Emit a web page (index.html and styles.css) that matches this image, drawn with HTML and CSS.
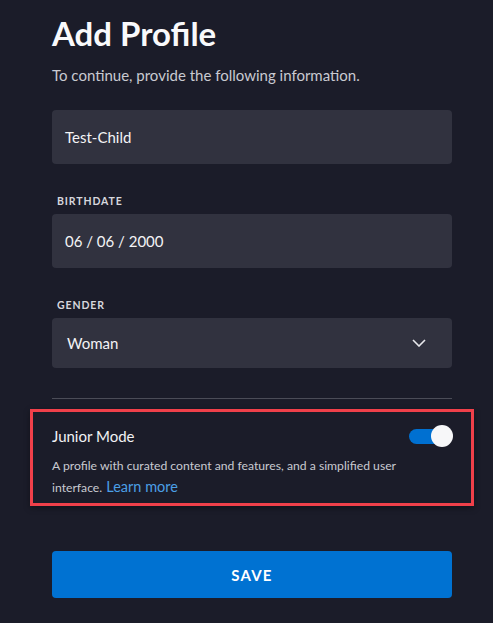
FILE: index.html
```html
<!DOCTYPE html>
<html lang="en">
<head>
<meta charset="utf-8">
<title>Add Profile</title>
<link rel="stylesheet" href="styles.css">
</head>
<body>
<main class="page">
  <h1 class="title">Add Profile</h1>
  <p class="subtitle">To continue, provide the following information.</p>

  <div class="field field-first">
    <div class="input">Test-Child</div>
  </div>

  <div class="field">
    <div class="label">BIRTHDATE</div>
    <div class="input">06 / 06 / 2000</div>
  </div>

  <div class="field">
    <div class="label">GENDER</div>
    <div class="input select">
      <span class="select-value">Woman</span>
      <svg class="chevron" width="14" height="8" viewBox="0 0 14 8"><path d="M1 1 L7 7 L13 1" fill="none" stroke="#e8e8ec" stroke-width="1.6"/></svg>
    </div>
  </div>

  <hr class="divider">

  <section class="junior">
    <div class="junior-head">
      <span class="junior-title">Junior Mode</span>
      <span class="toggle"><span class="toggle-knob"></span></span>
    </div>
    <p class="junior-desc">A profile with curated content and features, and a simplified user<br>interface. <a class="link" href="#">Learn more</a></p>
  </section>

  <button class="save">SAVE</button>
</main>
</body>
</html>
```

FILE: styles.css
```css
html, body {
  margin: 0;
  padding: 0;
  background: #1b1c29;
}
body {
  font-family: Lato, "Noto Sans", sans-serif;
  color: #f4f4f6;
  width: 493px;
  height: 623px;
  overflow: hidden;
}
.page {
  padding: 0 41px 0 52px;
  display: flex;
  flex-direction: column;
}
.title {
  margin: 13px 0 0;
  font-size: 33px;
  font-weight: 700;
  line-height: 40px;
  color: #f9f9fb;
}
.subtitle {
  margin: 12px 0 0;
  font-size: 15px;
  line-height: 20px;
  color: #c9cad1;
}
.field {
  display: flex;
  flex-direction: column;
  margin-top: 31px;
}
.field-first {
  margin-top: 25px;
}
.label {
  font-size: 10.5px;
  font-weight: 700;
  letter-spacing: 0.9px;
  color: #d6d7dd;
  margin: 0 0 7px 5px;
  line-height: 12px;
}
.input {
  height: 54px;
  width: 400px;
  box-sizing: border-box;
  background: #31323f;
  border-radius: 4px;
  padding: 0 13px;
  display: flex;
  align-items: center;
  font-size: 15px;
  color: #f4f4f6;
}
.select {
  height: 50px;
  padding: 0 26px 0 15px;
  justify-content: space-between;
}
.chevron {
  display: block;
}
.divider {
  margin: 30px 0 0;
  width: 400px;
  border: 0;
  border-top: 1px solid #4b4c57;
  height: 0;
}
.junior {
  margin: 10px 0 0 -22px;
  width: 444px;
  box-sizing: border-box;
  border: 3px solid #f0404a;
  padding: 11px 18px 4px 19px;
  box-shadow: 0 2px 6px rgba(0,0,0,0.35);
}
.junior-head {
  display: flex;
  justify-content: space-between;
  align-items: center;
  height: 26px;
}
.junior-title {
  font-size: 15px;
  color: #f1f1f4;
}
.toggle {
  position: relative;
  width: 44px;
  height: 22px;
  display: block;
}
.toggle::before {
  content: "";
  position: absolute;
  left: 0;
  top: 4px;
  width: 32px;
  height: 15px;
  border-radius: 8px;
  background: #0070d1;
}
.toggle-knob {
  position: absolute;
  right: 0;
  top: 0;
  width: 22px;
  height: 22px;
  border-radius: 50%;
  background: #f7f7f9;
}
.junior-desc {
  margin: 6px 0 0;
  font-size: 12.2px;
  line-height: 22px;
  color: #c9cad1;
}
.link {
  display: inline-block;
  margin-left: 1px;
  color: #4b9fe6;
  text-decoration: none;
  font-size: 14.5px;
  line-height: 14px;
}
.save {
  margin-top: 45px;
  width: 400px;
  height: 47px;
  border: 0;
  border-radius: 4px;
  background: #0072d2;
  color: #ffffff;
  font-family: Lato, "Noto Sans", sans-serif;
  font-size: 15px;
  font-weight: 700;
  letter-spacing: 1.2px;
}
```
